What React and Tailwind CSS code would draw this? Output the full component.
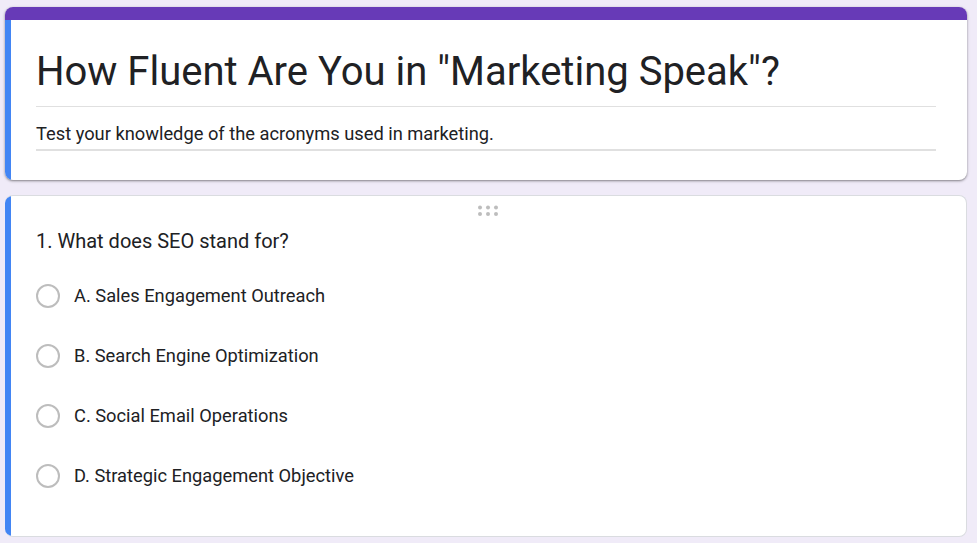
import React, { useState } from "react";

const options = [
  "A. Sales Engagement Outreach",
  "B. Search Engine Optimization",
  "C. Social Email Operations",
  "D. Strategic Engagement Objective",
];

function DragHandle() {
  return (
    <div className="flex justify-center pt-[9px]">
      <svg width="20" height="12" viewBox="0 0 20 12" className="mr-[2px]">
        {[2, 10, 18].map((x) =>
          [2.5, 9].map((y) => <circle key={`${x}-${y}`} cx={x} cy={y} r="2" fill="#bdbdbd" />)
        )}
      </svg>
    </div>
  );
}

export default function App() {
  const [picked, setPicked] = useState(null);

  return (
    <div
      className="min-h-[543px] bg-[#f0ebf8] pt-[7px] pb-[7px] text-[#202124]"
      style={{ fontFamily: "Roboto, 'Liberation Sans', sans-serif" }}
    >
      {/* Header card */}
      <div className="ml-[5px] w-[962px] rounded-lg overflow-hidden bg-white shadow-[0_1px_2px_rgba(0,0,0,0.35),0_1px_3px_1px_rgba(0,0,0,0.1)]">
        <div className="h-[13px] bg-[#673ab7]" />
        <div className="border-l-[6px] border-l-[#4285f4] pl-[25px] pt-[28px] pb-[29px]">
          <div className="w-[900px]">
            <h1 className="text-[40px] leading-[48px] font-normal pb-[10px] border-b border-[#e0e0e0]">
              How Fluent Are You in "Marketing Speak"?
            </h1>
            <p className="text-[18.3px] leading-[24px] pt-[15px] pb-[3px] border-b-2 border-[#e0e0e0]">
              Test your knowledge of the acronyms used in marketing.
            </p>
          </div>
        </div>
      </div>

      {/* Question card */}
      <div className="ml-[5px] mt-[15px] w-[962px] rounded-lg overflow-hidden bg-white border border-[#dadce0] border-l-0 flex">
        <div className="w-[6px] bg-[#4285f4]" />
        <div className="flex-1 pb-[30px]">
          <DragHandle />
          <div className="pl-[25px]">
            <p className="text-[20px] leading-[24px] pt-[12px]">1. What does SEO stand for?</p>
            <div className="mt-[13px]">
              {options.map((opt, i) => (
                <label
                  key={opt}
                  className="flex items-center h-[60px] cursor-pointer"
                  onClick={() => setPicked(i)}
                >
                  <span className="w-[24px] h-[24px] rounded-full border-2 border-[#bdbdbd] flex items-center justify-center">
                    {picked === i && <span className="w-[12px] h-[12px] rounded-full bg-[#673ab7]" />}
                  </span>
                  <span className="ml-[14px] text-[18.3px] leading-[24px]">{opt}</span>
                </label>
              ))}
            </div>
          </div>
        </div>
      </div>
    </div>
  );
}
